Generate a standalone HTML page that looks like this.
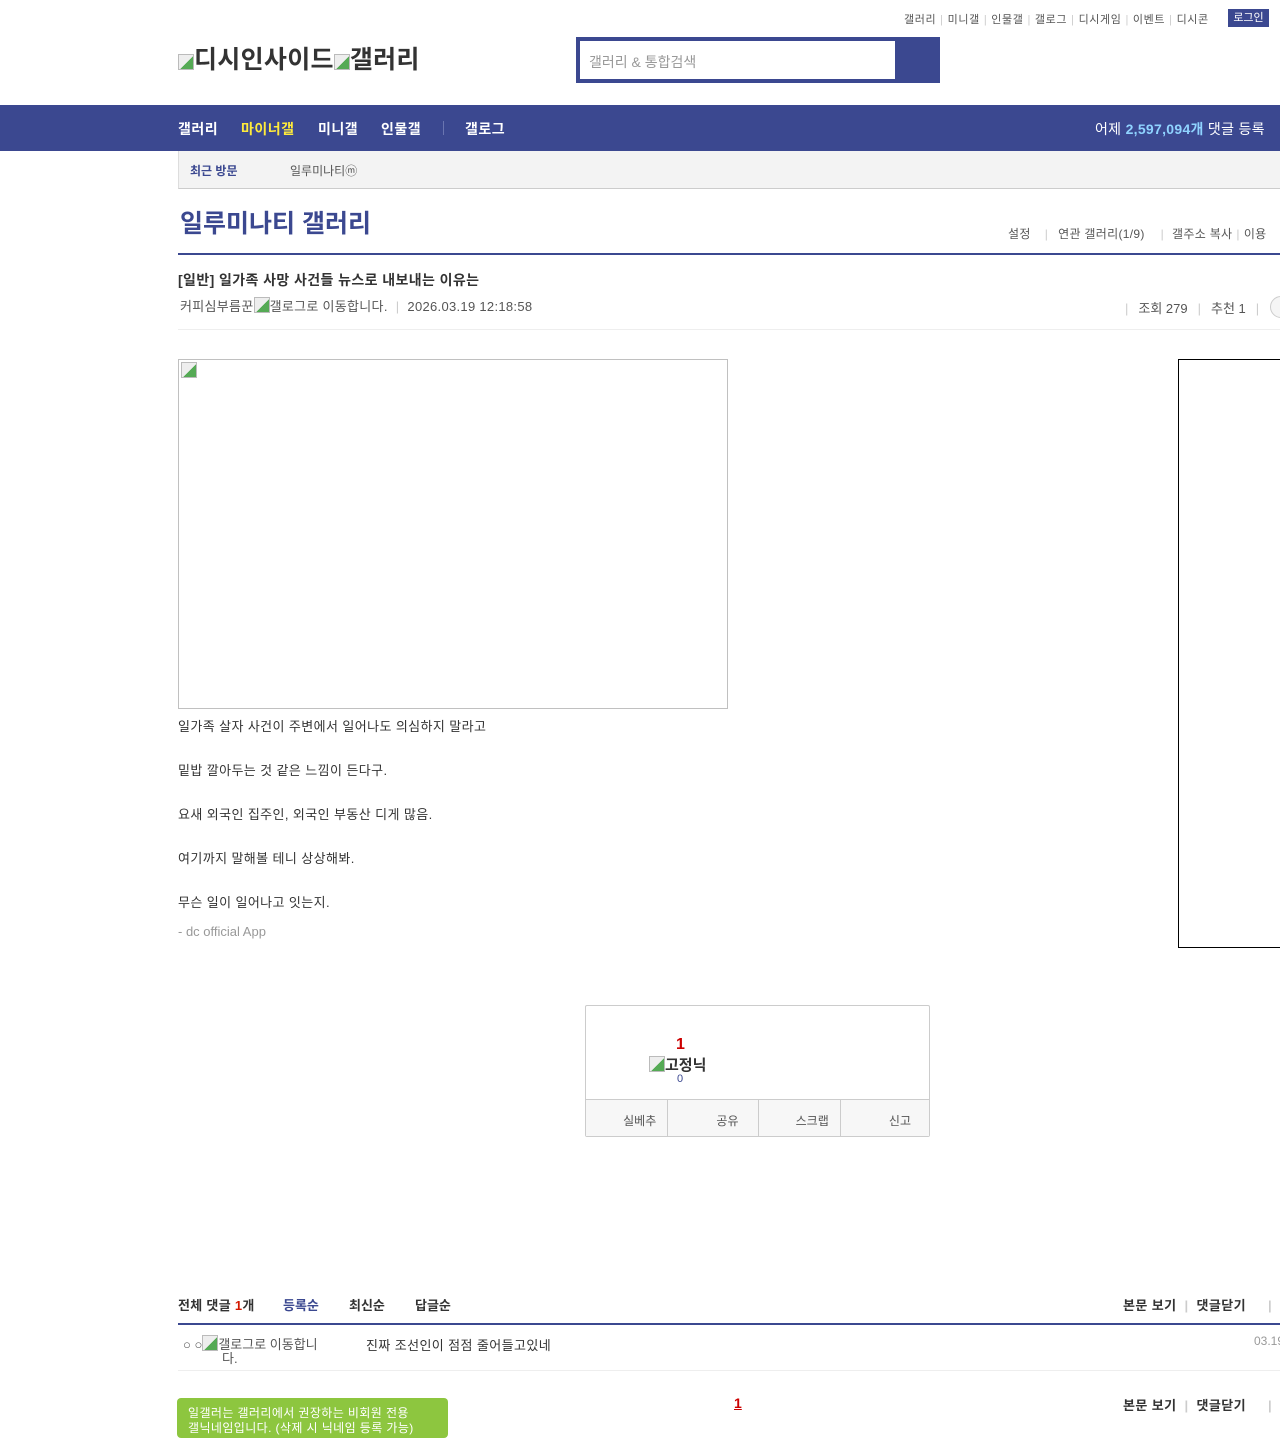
<!DOCTYPE html>
<html><head><meta charset="utf-8">
<style>
*{margin:0;padding:0;box-sizing:border-box}
body{width:1280px;height:1429px;overflow:hidden;background:#fff;font-family:"Liberation Sans","Noto Sans CJK KR",sans-serif;color:#333;position:relative}
.a{position:absolute;white-space:nowrap}
.sep{color:#ccc;margin:0 4px}
.bimg{display:inline-block;width:16px;height:16px;border:1px solid #bbb;background:linear-gradient(135deg,#eee 55%,#5a5 55%);vertical-align:-2px}
</style></head><body>
<div class="a" style="top:11px;left:904px;font-size:11px;color:#555;letter-spacing:.6px">갤러리<span class="sep">|</span>미니갤<span class="sep">|</span>인물갤<span class="sep">|</span>갤로그<span class="sep">|</span>디시게임<span class="sep">|</span>이벤트<span class="sep">|</span>디시콘</div>
<div class="a" style="top:9px;left:1228px;width:41px;height:18px;background:#3b4890;color:#fff;font-size:11px;text-align:center;line-height:18px">로그인</div>
<div class="a" style="top:40px;left:178px;font-size:25px;font-weight:bold;color:#333;letter-spacing:.3px"><span class="bimg"></span>디시인사이드<span class="bimg"></span>갤러리</div>
<div class="a" style="top:37px;left:576px;width:364px;height:46px;background:#3b4890"></div>
<div class="a" style="top:41px;left:580px;width:315px;height:38px;background:#fff;font-size:14px;color:#999;padding:11px 9px">갤러리 &amp; 통합검색</div>
<div class="a" style="top:105px;left:0;width:1280px;height:46px;background:#3b4890"></div>
<div class="a" style="top:119px;left:178px;font-size:14px;font-weight:bold;color:#fff;letter-spacing:.5px">갤러리</div>
<div class="a" style="top:119px;left:241px;font-size:14px;font-weight:bold;color:#ffeb3b;letter-spacing:.5px">마이너갤</div>
<div class="a" style="top:119px;left:318px;font-size:14px;font-weight:bold;color:#fff;letter-spacing:.5px">미니갤</div>
<div class="a" style="top:119px;left:381px;font-size:14px;font-weight:bold;color:#fff;letter-spacing:.5px">인물갤</div>
<div class="a" style="top:121px;left:443px;width:1px;height:14px;background:#6a75b0"></div>
<div class="a" style="top:119px;left:465px;font-size:14px;font-weight:bold;color:#fff;letter-spacing:.5px">갤로그</div>
<div class="a" style="top:119px;left:1095px;font-size:14px;color:#fff;letter-spacing:.3px">어제 <b style="color:#8fd3ff">2,597,094개</b> 댓글 등록</div>
<div class="a" style="top:151px;left:178px;width:1102px;height:38px;background:#f3f3f3;border-left:1px solid #ddd;border-bottom:1px solid #ccc"></div>
<div class="a" style="top:162px;left:190px;font-size:12px;font-weight:bold;color:#3b4890">최근 방문</div>
<div class="a" style="top:162px;left:290px;font-size:12px;color:#555">일루미나티ⓜ</div>
<div class="a" style="top:204px;left:180px;font-size:25px;font-weight:bold;color:#3b4890">일루미나티 갤러리</div>
<div class="a" style="top:225px;left:1008px;font-size:12px;color:#555;letter-spacing:.3px">설정<span class="sep" style="margin:0 10px 0 14px">|</span>연관 갤러리(1/9)<span class="sep" style="margin:0 8px 0 16px">|</span>갤주소 복사<span class="sep">|</span>이용</div>
<div class="a" style="top:253px;left:178px;width:1102px;height:2px;background:#3b4890"></div>
<div class="a" style="top:270px;left:178px;font-size:14px;font-weight:bold;color:#333;letter-spacing:.4px">[일반] 일가족 사망 사건들 뉴스로 내보내는 이유는</div>
<div class="a" style="top:296px;left:180px;font-size:13px;color:#555;letter-spacing:.3px">커피심부름꾼<span class="bimg"></span>갤로그로 이동합니다.<span class="sep" style="margin:0 8px">|</span>2026.03.19 12:18:58</div>
<div class="a" style="top:298px;left:1125px;font-size:13px;color:#555"><span class="sep" style="margin:0 10px 0 0">|</span>조회 279<span class="sep" style="margin:0 10px">|</span>추천 1<span class="sep" style="margin:0 10px">|</span></div>
<div class="a" style="top:296px;left:1270px;width:22px;height:22px;border:1px solid #ccc;border-radius:50%;background:#f5f5f5"></div>
<div class="a" style="top:329px;left:178px;width:1102px;height:1px;background:#eee"></div>
<div class="a" style="top:359px;left:178px;width:550px;height:350px;border:1px solid #c0c0c0"><span class="bimg" style="margin:2px"></span></div>
<div class="a" style="top:359px;left:1178px;width:110px;height:589px;border:1px solid #000"></div>
<div class="a" style="top:705px;left:178px;font-size:13px;color:#333;line-height:44px;white-space:normal;width:700px;letter-spacing:.4px">일가족 살자 사건이 주변에서 일어나도 의심하지 말라고<br>밑밥 깔아두는 것 같은 느낌이 든다구.<br>요새 외국인 집주인, 외국인 부동산 디게 많음.<br>여기까지 말해볼 테니 상상해봐.<br>무슨 일이 일어나고 잇는지.</div>
<div class="a" style="top:924px;left:178px;font-size:13px;color:#999">- dc official App</div>
<div class="a" style="top:1005px;left:585px;width:345px;height:132px;border:1px solid #ccc;border-radius:2px"></div>
<div class="a" style="top:1036px;left:676px;font-size:16px;font-weight:bold;color:#c00">1</div>
<div class="a" style="top:1054px;left:649px;font-size:15px;font-weight:bold;color:#333"><span class="bimg"></span>고정닉</div>
<div class="a" style="top:1073px;left:677px;font-size:11px;color:#3b4890">0</div>
<div class="a" style="top:1099px;left:586px;width:343px;height:37px;background:#f7f7f7;border-top:1px solid #ccc;display:flex;font-size:12px;color:#555">
<div style="flex:1;border-right:1px solid #ccc;text-align:right;padding:12px 11px 0 0">실베추</div>
<div style="flex:1;border-right:1px solid #ccc;text-align:right;padding:12px 19px 0 0">공유</div>
<div style="flex:1;border-right:1px solid #ccc;text-align:right;padding:12px 11px 0 0">스크랩</div>
<div style="flex:1;text-align:right;padding:12px 18px 0 0">신고</div></div>
<div class="a" style="top:1295px;left:178px;font-size:13px;font-weight:bold;color:#333;letter-spacing:.3px">전체 댓글 <span style="color:#d31900">1</span>개</div>
<div class="a" style="top:1295px;left:283px;font-size:13px;font-weight:bold;color:#3b4890">등록순</div>
<div class="a" style="top:1295px;left:349px;font-size:13px;font-weight:bold;color:#333">최신순</div>
<div class="a" style="top:1295px;left:415px;font-size:13px;font-weight:bold;color:#333">답글순</div>
<div class="a" style="top:1295px;left:1123px;font-size:13px;font-weight:bold;color:#333;letter-spacing:.4px">본문 보기<span class="sep" style="margin:0 8px">|</span>댓글닫기<span class="sep" style="margin:0 0 0 22px">|</span></div>
<div class="a" style="top:1323px;left:178px;width:1102px;height:2px;background:#3b4890"></div>
<div class="a" style="top:1335px;left:183px;font-size:13px;color:#555;line-height:14px">○ ○<span class="bimg"></span>갤로그로 이동합니<br><span style="padding-left:39px">다.</span></div>
<div class="a" style="top:1335px;left:366px;font-size:13px;color:#333;letter-spacing:.4px">진짜 조선인이 점점 줄어들고있네</div>
<div class="a" style="top:1334px;left:1254px;font-size:12px;color:#999">03.19</div>
<div class="a" style="top:1370px;left:178px;width:1102px;height:1px;background:#eee"></div>
<div class="a" style="top:1398px;left:177px;width:271px;height:40px;background:#8dc63f;border-radius:4px;color:#fff;font-size:12px;padding:8px 11px;line-height:15px;letter-spacing:.4px">일갤러는 갤러리에서 권장하는 비회원 전용<br>갤닉네임입니다. (삭제 시 닉네임 등록 가능)</div>
<div class="a" style="top:1395px;left:734px;font-size:14px;font-weight:bold;color:#c00;text-decoration:underline">1</div>
<div class="a" style="top:1395px;left:1123px;font-size:13px;font-weight:bold;color:#333;letter-spacing:.4px">본문 보기<span class="sep" style="margin:0 8px">|</span>댓글닫기<span class="sep" style="margin:0 0 0 22px">|</span></div>
</body></html>
